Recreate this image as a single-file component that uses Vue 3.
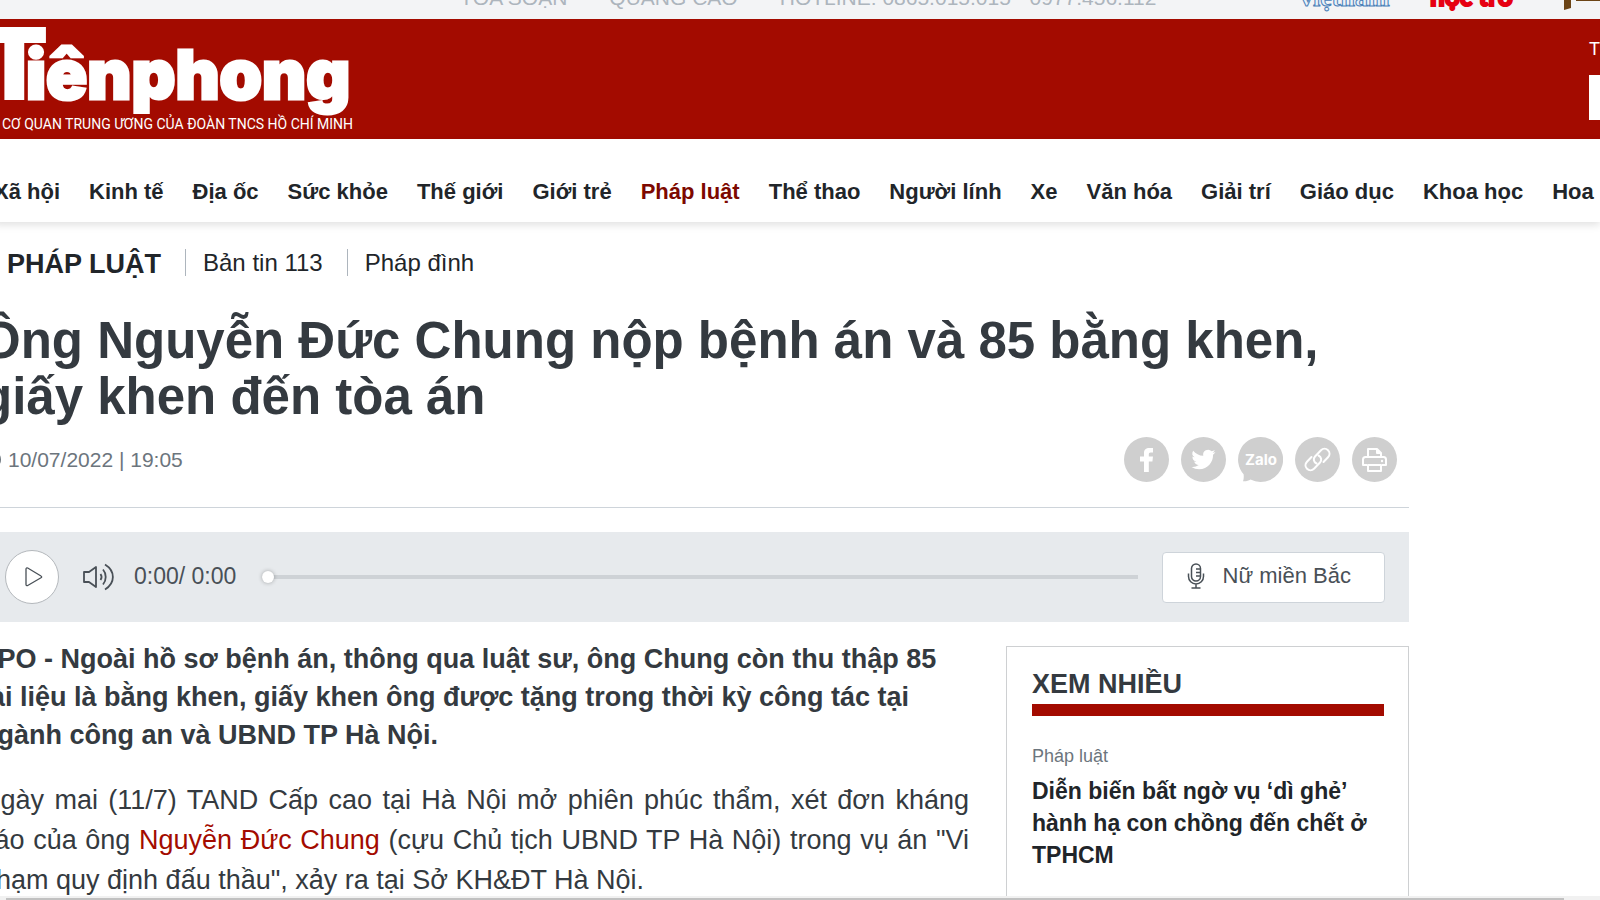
<script setup>
import { ref } from 'vue'

// 主导航
const menus = ['Xã hội', 'Kinh tế', 'Địa ốc', 'Sức khỏe', 'Thế giới', 'Giới trẻ', 'Pháp luật', 'Thể thao', 'Người lính', 'Xe', 'Văn hóa', 'Giải trí', 'Giáo dục', 'Khoa học', 'Hoa hậu']
const active = 'Pháp luật'

// 播放进度
const progress = ref(0)
</script>

<template>
	<div class="page">
		<div class="topbar">
			<div class="topbar-links">
				<a href="#">TÒA SOẠN</a>
				<a href="#">QUẢNG CÁO</a>
				<span>HOTLINE: 0865.015.015 - 0977.456.112</span>
			</div>
			<div class="topbar-brands">
				<a href="#" class="brand-vietnam">việtnam</a>
				<a href="#" class="brand-hoctro">học trò</a>
				<a href="#" class="brand-golf" aria-label="Golf">
					<svg width="50" height="24" viewBox="0 0 50 24">
						<path d="M0 0h7v22l-7 2z M12 12h38v3h-38z" fill="#6b4416" />
					</svg>
				</a>
			</div>
		</div>

		<header class="header">
			<a href="#" class="logo">
				<svg width="360" height="120" viewBox="0 0 360 120">
					<g fill="#fff" stroke="#fff">
						<text class="logo-name" x="-20" y="81" font-size="100" stroke-width="0">T</text>
						<text class="logo-name" x="26" y="80" font-size="68" stroke-width="3">iênphong</text>
						<text class="logo-sub" x="2" y="110" font-size="14" stroke-width="0">CƠ QUAN TRUNG ƯƠNG CỦA ĐOÀN TNCS HỒ CHÍ MINH</text>
					</g>
				</svg>
			</a>
			<div class="header-search">
				<label for="keyword">Tìm kiếm</label>
				<input id="keyword" type="text">
			</div>
		</header>

		<nav class="nav">
			<a v-for="item in menus" :key="item" href="#" :class="{ active: item === active }">{{ item }}</a>
		</nav>

		<main class="main">
			<div class="category">
				<h2><a href="#">PHÁP LUẬT</a></h2>
				<a href="#" class="category-sub">Bản tin 113</a>
				<a href="#" class="category-sub">Pháp đình</a>
			</div>

			<h1 class="title">Ông Nguyễn Đức Chung nộp bệnh án và 85 bằng khen, giấy khen đến tòa án</h1>

			<div class="meta">
				<time class="meta-time">
					<svg width="21" height="21" viewBox="0 0 21 21" fill="none" stroke="currentColor" stroke-width="2">
						<circle cx="10.500" cy="10.500" r="8.500" />
						<path d="M10.500 5v6l4 2" />
					</svg>
					10/07/2022 | 19:05
				</time>
				<!-- 分享按钮 -->
				<div class="share">
					<a href="#" aria-label="Facebook">
						<svg viewBox="0 0 45 45">
							<circle cx="22.500" cy="22.500" r="22.500" fill="#cfcfcf" />
							<path d="M20 35V24.500h-4V19.500h4v-3.500c0-3.500 2-5 5.200-5H29v4.500h-2.300c-1.500 0-1.900.7-1.900 2v2h4.200l-.6 5h-3.600V35z" fill="#fff" />
						</svg>
					</a>
					<a href="#" aria-label="Twitter">
						<svg viewBox="0 0 45 45">
							<circle cx="22.500" cy="22.500" r="22.500" fill="#cfcfcf" />
							<path transform="translate(10.500 10.500)" d="M23.950 4.570a10 10 0 0 1-2.820.770 4.960 4.960 0 0 0 2.160-2.720c-.950.550-2 .950-3.130 1.180a4.920 4.920 0 0 0-8.380 4.480C7.690 8.090 4.070 6.130 1.640 3.160a4.920 4.920 0 0 0 1.520 6.570 4.900 4.900 0 0 1-2.230-.610v.060a4.920 4.920 0 0 0 3.950 4.830 5 5 0 0 1-2.210.080 4.940 4.940 0 0 0 4.600 3.420A9.870 9.870 0 0 1 0 19.540a14 14 0 0 0 7.550 2.210c9.050 0 14-7.500 14-13.980 0-.210 0-.420-.020-.630a9.940 9.940 0 0 0 2.420-2.570z" fill="#fff" />
						</svg>
					</a>
					<a href="#" aria-label="Zalo">
						<svg viewBox="0 0 45 45">
							<path d="M22.500 0a22.500 22.500 0 1 1-10 42.600c-2 1.400-4.500 1.900-7.500 1.700.8-2 .9-4.600.6-7A22.500 22.500 0 0 1 22.500 0z" fill="#cfcfcf" />
							<text class="zalo" x="23" y="28" text-anchor="middle" font-size="15" fill="#fff">Zalo</text>
						</svg>
					</a>
					<a href="#" aria-label="Link">
						<svg viewBox="0 0 45 45">
							<circle cx="22.500" cy="22.500" r="22.500" fill="#cfcfcf" />
							<g fill="none" stroke="#fff" stroke-width="2" stroke-linecap="round">
								<path d="M21.500 26.500c-3-1.500-3.500-4.800-1.500-7l6-6.200c2-2 5-2 7 0s2 4.900 0 7l-4.500 4.700" />
								<path d="M23.500 18.500c3 1.500 3.500 4.800 1.500 7l-6 6.200c-2 2-5 2-7 0s-2-4.900 0-7l4.500-4.700" />
							</g>
						</svg>
					</a>
					<a href="#" aria-label="Print">
						<svg viewBox="0 0 45 45">
							<circle cx="22.500" cy="22.500" r="22.500" fill="#cfcfcf" />
							<g fill="none" stroke="#fff" stroke-width="2" stroke-linejoin="round">
								<path d="M16 20v-8h9l4 4v4M25 12v4h4" />
								<path d="M15 28h-4v-5.500c0-1.500 1-2.500 2.500-2.500h18c1.500 0 2.500 1 2.500 2.500V28h-4" />
								<path d="M16 28h13v6H16z" />
							</g>
							<circle cx="30" cy="24" r="1.200" fill="#fff" />
						</svg>
					</a>
				</div>
			</div>

			<!-- 语音播放器 -->
			<div class="player">
				<button type="button" class="player-play" aria-label="Play">
					<svg width="20" height="22" viewBox="0 0 20 22">
						<path d="M2 3c0-1 .8-1.500 1.700-1L17 10c.9.500.9 1.300 0 1.800L3.700 19.500c-.9.500-1.700 0-1.700-1z" fill="none" stroke="#495057" stroke-width="1.300" />
					</svg>
				</button>
				<button type="button" class="player-volume" aria-label="Volume">
					<svg width="32" height="28" viewBox="0 0 32 28" fill="none" stroke="#495057" stroke-width="1.800">
						<path d="M1 9h5l7-5v20l-7-5H1z" stroke-linejoin="round" />
						<path d="M17.500 11c1.300 1.800 1.300 4.200 0 6M20 6.500c3.600 4.200 3.600 10.800 0 15M22 1.500c10.500 6.500 10.500 18.500 0 25" />
					</svg>
				</button>
				<span class="player-time">0:00/ 0:00</span>
				<input v-model="progress" class="player-range" type="range" min="0" max="100" aria-label="Progress">
				<button type="button" class="player-voice">
					<svg width="18" height="26" viewBox="0 0 18 26" fill="none" stroke="#495057" stroke-width="1.500">
						<rect x="4.500" y="1" width="9" height="17" rx="4.500" />
						<path d="M1.500 10.500v3a7.500 7.500 0 0 0 15 0v-3M9 21v4M4.500 25h9M9 6h4M9 9.500h4M9 13h4" />
					</svg>
					Nữ miền Bắc
				</button>
			</div>

			<div class="content">
				<article>
					<p class="sapo">TPO - Ngoài hồ sơ bệnh án, thông qua luật sư, ông Chung còn thu thập 85 tài liệu là bằng khen, giấy khen ông được tặng trong thời kỳ công tác tại ngành công an và UBND TP Hà Nội.</p>
					<p class="body">Ngày mai (11/7) TAND Cấp cao tại Hà Nội mở phiên phúc thẩm, xét đơn kháng cáo của ông <a href="#">Nguyễn Đức Chung</a> (cựu Chủ tịch UBND TP Hà Nội) trong vụ án "Vi phạm quy định đấu thầu", xảy ra tại Sở KH&amp;ĐT Hà Nội.</p>
				</article>
				<aside class="most-read">
					<h3>XEM NHIỀU</h3>
					<a href="#" class="most-cate">Pháp luật</a>
					<a href="#" class="most-title">Diễn biến bất ngờ vụ ‘dì ghẻ’ hành hạ con chồng đến chết ở TPHCM</a>
				</aside>
			</div>
		</main>

		<!-- 底部横向滚动条 -->
		<div class="scrollbar"><div class="scrollbar-thumb"></div></div>
	</div>
</template>

<style>
body {
	margin: 0;
	background: #fff;
}
</style>

<style scoped>
.page {
	position: relative;
	height: 100vh;
	overflow: hidden;
	font-family: "Liberation Sans", Arial, sans-serif;
	color: #343a40;
}

.page * {
	box-sizing: border-box;
}

a {
	color: inherit;
	text-decoration: none;
}

h1, h2, h3, p {
	margin: 0;
}

button {
	padding: 0;
	border: 0;
	background: none;
	font-family: inherit;
	color: inherit;
}

svg {
	display: block;
	flex: none;
}

/* 顶部灰条，只露出下半部分 */
.topbar {
	display: flex;
	align-items: flex-end;
	justify-content: space-between;
	height: 19px;
	padding-left: 460px;
	background: #f3f4f6;
	overflow: hidden;
}

.topbar-links {
	display: flex;
	gap: 42px;
	padding-bottom: 9px;
	font-size: 21px;
	line-height: 24px;
	color: #adb5bd;
	white-space: nowrap;
}

.topbar-brands {
	display: flex;
	align-items: flex-end;
	width: 300px;
	line-height: 30px;
	white-space: nowrap;
}

.topbar-brands a {
	flex: none;
}

.brand-vietnam {
	width: 130px;
	padding-bottom: 6px;
	font-family: "Liberation Serif", serif;
	font-size: 26px;
	font-weight: bold;
	color: #e8f0f8;
	-webkit-text-stroke: 1px #4a80b8;
}

.brand-hoctro {
	width: 134px;
	padding-bottom: 8px;
	font-family: Lato, sans-serif;
	font-size: 26px;
	font-weight: 900;
	color: #e60012;
	-webkit-text-stroke: 2px #e60012;
}

.brand-golf {
	padding-bottom: 9px;
}

.header {
	display: flex;
	justify-content: space-between;
	height: 120px;
	background: #a30b00;
	overflow: hidden;
}

.logo-name {
	font-family: Inter, sans-serif;
	font-weight: 900;
}

.logo-sub {
	font-family: Roboto, sans-serif;
	font-weight: 400;
}

.header-search {
	display: flex;
	flex-direction: column;
	gap: 14px;
	width: 11px;
	padding-top: 19px;
	font-size: 18px;
	line-height: 23px;
	color: #fff;
	white-space: nowrap;
}

.header-search input {
	width: 270px;
	height: 45px;
	border: 0;
	background: #fff;
}

.nav {
	display: flex;
	align-items: center;
	gap: 29px;
	height: 83px;
	padding-top: 22px;
	margin-left: -6px;
	box-shadow: 0 3px 8px rgba(0, 0, 0, .12);
	font-size: 22px;
	font-weight: bold;
	color: #212529;
	white-space: nowrap;
}

.nav .active {
	color: #7d0800;
}

.main {
	margin-left: -19px;
	padding-right: 191px;
}

.category {
	display: flex;
	align-items: center;
	height: 91px;
	padding: 0 0 11px 26px;
	color: #212529;
}

.category h2 {
	padding-top: 4px;
	margin-right: 24px;
	font-size: 27px;
}

.category-sub {
	padding: 0 24px 0 17px;
	border-left: 1px solid #adb5bd;
	font-size: 24px;
	line-height: 27px;
}

.title {
	font-size: 51px;
	line-height: 56px;
}

.meta {
	display: flex;
	align-items: center;
	justify-content: space-between;
	padding: 12px 12px 25px 0;
	border-bottom: 1px solid #ced4da;
}

.meta-time {
	display: flex;
	align-items: center;
	gap: 6px;
	font-size: 21px;
	color: #6c757d;
}

.share {
	display: flex;
	gap: 12px;
}

.share svg {
	width: 45px;
	height: 45px;
}

.zalo {
	font-family: Inter, sans-serif;
	font-weight: 700;
}

.player {
	display: flex;
	align-items: center;
	height: 90px;
	padding: 0 24px;
	margin-top: 24px;
	background: #e7eaed;
	color: #495057;
}

.player-play {
	display: flex;
	align-items: center;
	justify-content: center;
	width: 54px;
	height: 54px;
	padding-left: 4px;
	border: 1px solid #b4b8bc;
	border-radius: 50%;
	background: #fff;
}

.player-volume {
	margin: 0 19px 0 24px;
}

.player-time {
	padding-bottom: 2px;
	font-size: 23px;
}

.player-range {
	flex: 1;
	height: 12px;
	margin: 0 24px 0 26px;
	appearance: none;
	background: none;
}

.player-range::-webkit-slider-runnable-track {
	height: 4px;
	background: #ced2d6;
}

.player-range::-webkit-slider-thumb {
	appearance: none;
	width: 12px;
	height: 12px;
	margin-top: -4px;
	border-radius: 50%;
	background: #fff;
	box-shadow: 0 0 4px rgba(0, 0, 0, .3);
}

.player-voice {
	display: flex;
	align-items: center;
	gap: 18px;
	height: 51px;
	padding: 0 33px 2px 24px;
	border: 1px solid #ced4da;
	border-radius: 4px;
	background: #fff;
	font-size: 22px;
}

.content {
	display: grid;
	grid-template-columns: 1fr 403px;
	gap: 37px;
	padding-top: 18px;
}

.sapo {
	font-size: 27px;
	font-weight: bold;
	line-height: 38px;
}

.body {
	margin-top: 26px;
	font-size: 27px;
	line-height: 40px;
	text-align: justify;
}

.body a {
	color: #a30b00;
}

.most-read {
	height: 400px;
	padding: 17px 24px 0 25px;
	margin-top: 6px;
	border: 1px solid #ced0d2;
}

.most-read h3 {
	margin-bottom: 28px;
	border-bottom: 12px solid #a30b00;
	font-size: 27px;
	line-height: 40px;
}

.most-cate {
	display: block;
	margin-bottom: 7px;
	font-size: 18px;
	line-height: 24px;
	color: #6c757d;
}

.most-title {
	display: block;
	font-size: 23px;
	font-weight: bold;
	line-height: 32px;
	color: #212529;
}

.scrollbar {
	position: absolute;
	left: 0;
	right: 0;
	bottom: 0;
	padding: 2px 36px 0 6px;
	background: #f1f1f1;
}

.scrollbar-thumb {
	height: 2px;
	background: #c1c1c1;
}
</style>
